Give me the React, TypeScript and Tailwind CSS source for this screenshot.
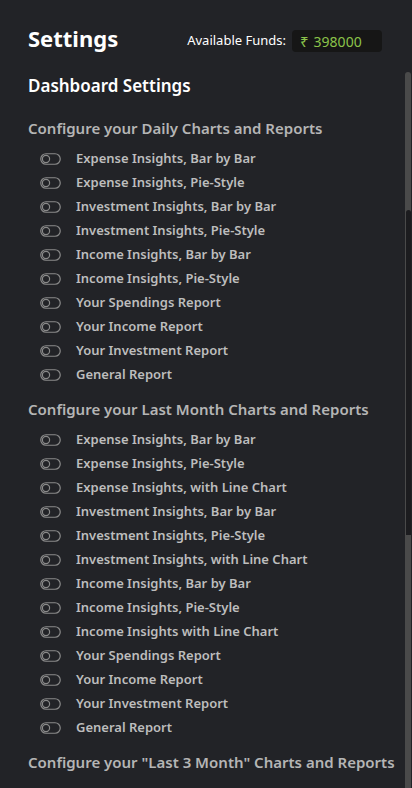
import React from 'react';

const daily = [
  'Expense Insights, Bar by Bar',
  'Expense Insights, Pie-Style',
  'Investment Insights, Bar by Bar',
  'Investment Insights, Pie-Style',
  'Income Insights, Bar by Bar',
  'Income Insights, Pie-Style',
  'Your Spendings Report',
  'Your Income Report',
  'Your Investment Report',
  'General Report',
];

const lastMonth = [
  'Expense Insights, Bar by Bar',
  'Expense Insights, Pie-Style',
  'Expense Insights, with Line Chart',
  'Investment Insights, Bar by Bar',
  'Investment Insights, Pie-Style',
  'Investment Insights, with Line Chart',
  'Income Insights, Bar by Bar',
  'Income Insights, Pie-Style',
  'Income Insights with Line Chart',
  'Your Spendings Report',
  'Your Income Report',
  'Your Investment Report',
  'General Report',
];

function Toggle() {
  return (
    <svg width="21" height="12" viewBox="0 0 21 12" className="shrink-0">
      <rect x="0.75" y="0.75" width="19.5" height="10.5" rx="5.25" fill="none" stroke="#8a8a8a" strokeWidth="1.2" />
      <circle cx="6" cy="6" r="3.6" fill="none" stroke="#8a8a8a" strokeWidth="1.2" />
    </svg>
  );
}

function Section({ title, items }: { title: string; items: string[] }) {
  return (
    <div className="flex flex-col">
      <h3 className="text-[15px] font-semibold text-[#b5b5b5] leading-[20px]">{title}</h3>
      {items.length > 0 && (
        <ul className="flex flex-col mt-[9px] pl-3">
          {items.map((item, i) => (
            <li key={i} className="flex items-center gap-[15px] h-[24px]">
              <Toggle />
              <span className="text-[13px] font-semibold text-[#bdbdbd]">{item}</span>
            </li>
          ))}
        </ul>
      )}
    </div>
  );
}

export default function App() {
  return (
    <div
      className="w-[412px] h-[788px] bg-[#222327] flex flex-col overflow-hidden"
      style={{ fontFamily: '"Noto Sans", "Open Sans", sans-serif' }}
    >
      {/* Header */}
      <div className="flex items-start justify-between pl-7 pr-[30px] pt-[24px] h-[72px] shrink-0">
        <h1 className="text-[22px] font-bold text-white leading-[32px] -mt-[2px]">Settings</h1>
        <div className="flex items-center gap-[6px] mt-[6px]">
          <span className="text-[13px] text-white">Available Funds:</span>
          <div className="w-[90px] h-[22px] rounded bg-[#161616] flex items-center pl-[8px] text-[14px] text-[#8bc34a]">
            <span className="text-[15px] mr-[5px]">₹</span>398000
          </div>
        </div>
      </div>

      {/* Scroll area */}
      <div className="flex flex-1 min-h-0">
        <div className="flex-1 pl-7 mt-[2px]">
          <h2 className="text-[17px] font-semibold text-white leading-[24px]">Dashboard Settings</h2>
          <div className="flex flex-col gap-[12px] mt-[20px]">
            <Section title="Configure your Daily Charts and Reports" items={daily} />
            <Section title="Configure your Last Month Charts and Reports" items={lastMonth} />
            <Section title={'Configure your "Last 3 Month" Charts and Reports'} items={[]} />
          </div>
        </div>
        {/* Scrollbar */}
        <div className="w-[6px] mr-[1px] bg-[#4a4a4a] rounded-t-sm flex flex-col">
          <div className="mt-[138px] h-[325px] ml-[1px] bg-[#1c1c1f] rounded-t-sm" />
        </div>
      </div>
    </div>
  );
}
